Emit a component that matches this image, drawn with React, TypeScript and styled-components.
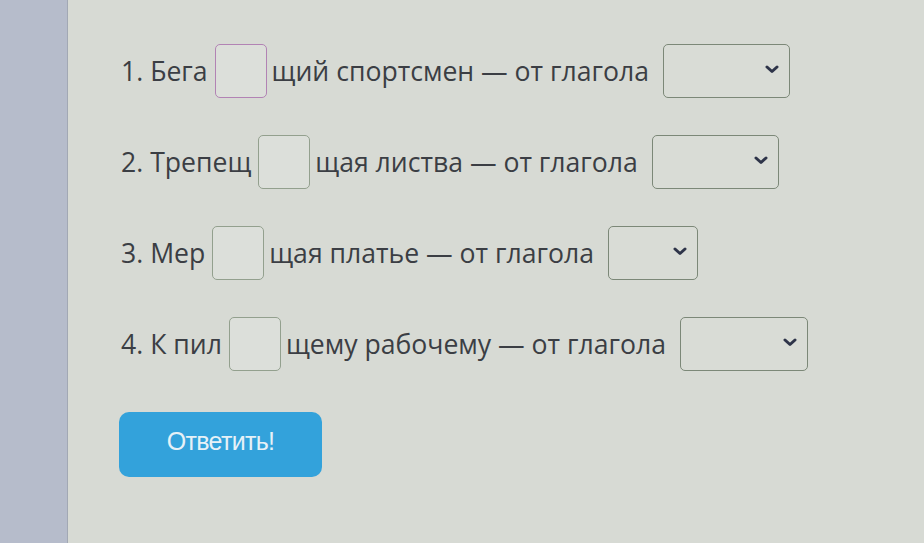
import styled, { createGlobalStyle } from "styled-components";

const GlobalStyle = createGlobalStyle`
  html, body {
    margin: 0;
    padding: 0;
    height: 100%;
    overflow: hidden;
  }
  body {
    font-family: "Open Sans", "Noto Sans", sans-serif;
    background: #d7dad4;
  }
`;

type Task = {
  num: number;
  before: string;
  after: string;
  selectWidth: number;
  active?: boolean;
};

const tasks: Task[] = [
  { num: 1, before: "Бега", after: "щий спортсмен — от глагола", selectWidth: 127, active: true },
  { num: 2, before: "Трепещ", after: "щая листва — от глагола", selectWidth: 127 },
  { num: 3, before: "Мер", after: "щая платье — от глагола", selectWidth: 90 },
  { num: 4, before: "К пил", after: "щему рабочему — от глагола", selectWidth: 128 },
];

const App = () => {
  return (
    <>
      <GlobalStyle />
      <Page>
        <Sidebar />
        <Main>
          <List>
            {tasks.map((t) => (
              <Row key={t.num}>
                <Text>
                  {t.num}. {t.before}
                </Text>
                <LetterBox $active={t.active} />
                <Text $after>{t.after}</Text>
                <Select $width={t.selectWidth}>
                  <svg width="14" height="9" viewBox="0 0 14 9">
                    <path
                      d="M2 2 L7 6.5 L12 2"
                      fill="none"
                      stroke="#2e3449"
                      strokeWidth="3"
                      strokeLinecap="round"
                      strokeLinejoin="round"
                    />
                  </svg>
                </Select>
              </Row>
            ))}
          </List>
          <SubmitButton>Ответить!</SubmitButton>
        </Main>
      </Page>
    </>
  );
};

export default App;

const Page = styled.div`
  display: grid;
  grid-template-columns: 68px 1fr;
  height: 100vh;
`;

const Sidebar = styled.div`
  background: #b6bccb;
  border-right: 1px solid #a2a8b4;
`;

const Main = styled.div`
  padding: 44px 0 0 53px;
  display: flex;
  flex-direction: column;
  align-items: flex-start;
`;

const List = styled.div`
  display: flex;
  flex-direction: column;
  gap: 37px;
`;

const Row = styled.div`
  display: flex;
  align-items: center;
  height: 54px;
`;

const Text = styled.span<{ $after?: boolean }>`
  font-size: 26.6px;
  color: #3b3e44;
  white-space: nowrap;
  margin: ${(p) => (p.$after ? "0 14px 0 5px" : "0 7px 0 0")};
`;

const LetterBox = styled.div<{ $active?: boolean }>`
  width: 52px;
  height: 54px;
  box-sizing: border-box;
  border: 1.5px solid ${(p) => (p.$active ? "#b283b4" : "#93a08e")};
  border-radius: 5px;
  background: #dcdfda;
`;

const Select = styled.div<{ $width: number }>`
  width: ${(p) => p.$width}px;
  height: 54px;
  box-sizing: border-box;
  border: 1.5px solid #7c8878;
  border-radius: 5px;
  background: #d9dcd6;
  display: flex;
  align-items: center;
  justify-content: flex-end;
  padding-right: 10px;
  padding-bottom: 4px;
`;

const SubmitButton = styled.button`
  margin-top: 41px;
  margin-left: -2px;
  width: 203px;
  height: 65px;
  border: none;
  border-radius: 10px;
  background: #33a2db;
  color: #e6f1f7;
  font-family: "Liberation Sans", Arial, sans-serif;
  font-size: 25px;
  letter-spacing: -0.7px;
  padding: 0 0 6px 0;
  cursor: pointer;
`;
